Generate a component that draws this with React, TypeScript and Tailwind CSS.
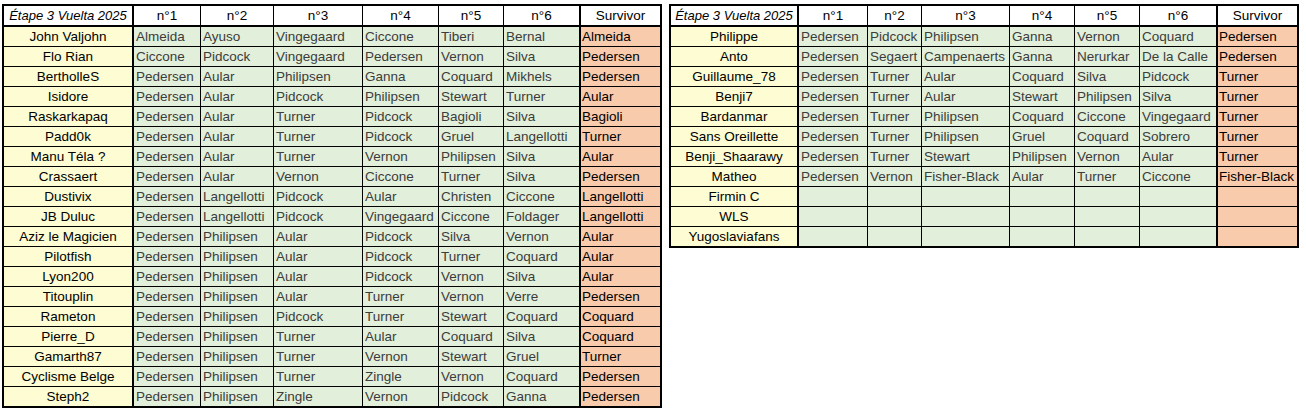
import React from 'react';

const leftRows: [string, string[], string][] = [
  ['John Valjohn', ['Almeida', 'Ayuso', 'Vingegaard', 'Ciccone', 'Tiberi', 'Bernal'], 'Almeida'],
  ['Flo Rian', ['Ciccone', 'Pidcock', 'Vingegaard', 'Pedersen', 'Vernon', 'Silva'], 'Pedersen'],
  ['BertholleS', ['Pedersen', 'Aular', 'Philipsen', 'Ganna', 'Coquard', 'Mikhels'], 'Pedersen'],
  ['Isidore', ['Pedersen', 'Aular', 'Pidcock', 'Philipsen', 'Stewart', 'Turner'], 'Aular'],
  ['Raskarkapaq', ['Pedersen', 'Aular', 'Turner', 'Pidcock', 'Bagioli', 'Silva'], 'Bagioli'],
  ['Padd0k', ['Pedersen', 'Aular', 'Turner', 'Pidcock', 'Gruel', 'Langellotti'], 'Turner'],
  ['Manu Téla ?', ['Pedersen', 'Aular', 'Turner', 'Vernon', 'Philipsen', 'Silva'], 'Aular'],
  ['Crassaert', ['Pedersen', 'Aular', 'Vernon', 'Ciccone', 'Turner', 'Silva'], 'Pedersen'],
  ['Dustivix', ['Pedersen', 'Langellotti', 'Pidcock', 'Aular', 'Christen', 'Ciccone'], 'Langellotti'],
  ['JB Duluc', ['Pedersen', 'Langellotti', 'Pidcock', 'Vingegaard', 'Ciccone', 'Foldager'], 'Langellotti'],
  ['Aziz le Magicien', ['Pedersen', 'Philipsen', 'Aular', 'Pidcock', 'Silva', 'Vernon'], 'Aular'],
  ['Pilotfish', ['Pedersen', 'Philipsen', 'Aular', 'Pidcock', 'Turner', 'Coquard'], 'Aular'],
  ['Lyon200', ['Pedersen', 'Philipsen', 'Aular', 'Pidcock', 'Vernon', 'Silva'], 'Aular'],
  ['Titouplin', ['Pedersen', 'Philipsen', 'Aular', 'Turner', 'Vernon', 'Verre'], 'Pedersen'],
  ['Rameton', ['Pedersen', 'Philipsen', 'Pidcock', 'Turner', 'Stewart', 'Coquard'], 'Coquard'],
  ['Pierre_D', ['Pedersen', 'Philipsen', 'Turner', 'Aular', 'Coquard', 'Silva'], 'Coquard'],
  ['Gamarth87', ['Pedersen', 'Philipsen', 'Turner', 'Vernon', 'Stewart', 'Gruel'], 'Turner'],
  ['Cyclisme Belge', ['Pedersen', 'Philipsen', 'Turner', 'Zingle', 'Vernon', 'Coquard'], 'Pedersen'],
  ['Steph2', ['Pedersen', 'Philipsen', 'Zingle', 'Vernon', 'Pidcock', 'Ganna'], 'Pedersen'],
];

const rightRows: [string, string[], string][] = [
  ['Philippe', ['Pedersen', 'Pidcock', 'Philipsen', 'Ganna', 'Vernon', 'Coquard'], 'Pedersen'],
  ['Anto', ['Pedersen', 'Segaert', 'Campenaerts', 'Ganna', 'Nerurkar', 'De la Calle'], 'Pedersen'],
  ['Guillaume_78', ['Pedersen', 'Turner', 'Aular', 'Coquard', 'Silva', 'Pidcock'], 'Turner'],
  ['Benji7', ['Pedersen', 'Turner', 'Aular', 'Stewart', 'Philipsen', 'Silva'], 'Turner'],
  ['Bardanmar', ['Pedersen', 'Turner', 'Philipsen', 'Coquard', 'Ciccone', 'Vingegaard'], 'Turner'],
  ['Sans Oreillette', ['Pedersen', 'Turner', 'Philipsen', 'Gruel', 'Coquard', 'Sobrero'], 'Turner'],
  ['Benji_Shaarawy', ['Pedersen', 'Turner', 'Stewart', 'Philipsen', 'Vernon', 'Aular'], 'Turner'],
  ['Matheo', ['Pedersen', 'Vernon', 'Fisher-Black', 'Aular', 'Turner', 'Ciccone'], 'Fisher-Black'],
  ['Firmin C', ['', '', '', '', '', ''], ''],
  ['WLS', ['', '', '', '', '', ''], ''],
  ['Yugoslaviafans', ['', '', '', '', '', ''], ''],
];

const headers = ['n°1', 'n°2', 'n°3', 'n°4', 'n°5', 'n°6'];

const StageTable: React.FC<any> = ({ rows, cols }) => {
  const last = rows.length - 1;
  return (
    <div className="border-2 border-black grid self-start" style={{ gridTemplateColumns: cols }}>
      {/* header */}
      <div className="h-[21px] leading-[20px] text-center text-[13px] italic bg-white border-r-2 border-b-2 border-black whitespace-nowrap overflow-hidden">
        Étape 3 Vuelta 2025
      </div>
      {headers.map((h, i) => (
        <div
          key={h}
          className={
            i === 5
              ? 'h-[21px] leading-[20px] text-center bg-white border-r-2 border-b-2 border-black'
              : 'h-[21px] leading-[20px] text-center bg-white border-r border-b-2 border-black'
          }
        >
          {h}
        </div>
      ))}
      <div className="h-[21px] leading-[20px] text-center bg-white border-b-2 border-black">Survivor</div>

      {rows.map(([name, picks, surv]: [string, string[], string], r: number) => (
        <React.Fragment key={name}>
          <div
            className={
              r === last
                ? 'h-[19px] leading-[20px] text-center bg-[#fdfcd2] border-r-2 border-black whitespace-nowrap overflow-hidden'
                : 'h-[20px] leading-[20px] text-center bg-[#fdfcd2] border-r-2 border-b border-black whitespace-nowrap overflow-hidden'
            }
          >
            {name}
          </div>
          {picks.map((p, i) => (
            <div
              key={i}
              className={[
                'leading-[20px] pl-[2px] bg-[#e2efda] text-[#3c3c3c] whitespace-nowrap overflow-hidden border-black',
                r === last ? 'h-[19px]' : 'h-[20px] border-b',
                i === 5 ? 'border-r-2' : 'border-r',
              ].join(' ')}
            >
              {p}
            </div>
          ))}
          <div
            className={
              r === last
                ? 'h-[19px] leading-[20px] pl-[1px] bg-[#f8cbad] text-black whitespace-nowrap overflow-hidden'
                : 'h-[20px] leading-[20px] pl-[1px] bg-[#f8cbad] text-black border-b border-black whitespace-nowrap overflow-hidden'
            }
          >
            {surv}
          </div>
        </React.Fragment>
      ))}
    </div>
  );
};

export default function App() {
  return (
    <div
      className="w-[1306px] h-[414px] bg-white flex items-start gap-[7px] pt-[4px] pl-[2px] text-[13.5px] text-black"
      style={{ fontFamily: '"Liberation Sans", Arial, sans-serif' }}
    >
      <StageTable rows={leftRows} cols="130px 67px 73px 89px 76px 65px 77px 79px" />
      <StageTable rows={rightRows} cols="128px 69px 54px 88px 65px 65px 78px 79px" />
    </div>
  );
}
